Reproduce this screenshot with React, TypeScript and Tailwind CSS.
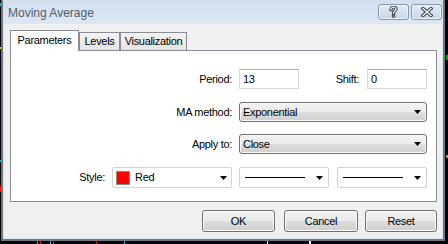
import React from "react";

const ui = "font-['Liberation_Sans',Arial,sans-serif] text-[11px] tracking-[-0.3px] text-black";
const btnBg =
  "bg-[linear-gradient(#f2f2f2_0%,#ebebeb_50%,#dddddd_50%,#cfcfcf_100%)] shadow-[inset_0_0_0_1px_#fbfbfb]";

function Arrow() {
  return (
    <svg width="7" height="4" viewBox="0 0 7 4" className="shrink-0">
      <path d="M0 0H7L3.5 4Z" fill="#000" />
    </svg>
  );
}

function HelpGlyph() {
  return (
    <svg width="9" height="12" viewBox="0 0 9 12">
      <path d="M2 3.6C2 1.8 3.2 1 4.5 1C5.9 1 7 1.9 7 3.3C7 5 4.5 5.2 4.5 7.2" fill="none" stroke="#37404d" strokeWidth="3.2" strokeLinecap="square" />
      <rect x="2.9" y="8.6" width="3.2" height="3" fill="#37404d" />
      <path d="M2 3.6C2 1.8 3.2 1 4.5 1C5.9 1 7 1.9 7 3.3C7 5 4.5 5.2 4.5 7.2" fill="none" stroke="#fff" strokeWidth="1.2" strokeLinecap="square" />
      <rect x="4" y="9.6" width="1" height="1" fill="#fff" />
    </svg>
  );
}

function CloseGlyph() {
  return (
    <svg width="12" height="10" viewBox="0 0 12 10">
      <path d="M2 1.5L10 8.5M10 1.5L2 8.5" stroke="#37404d" strokeWidth="3.4" strokeLinecap="square" />
      <path d="M2 1.5L10 8.5M10 1.5L2 8.5" stroke="#fff" strokeWidth="1.3" strokeLinecap="square" />
    </svg>
  );
}

function TitleButton({ children }: { children: React.ReactNode }) {
  return (
    <div className="w-[31px] h-[16px] flex items-center justify-center rounded-[3px] border border-[#8798b1] bg-[linear-gradient(#e2ebf6,#c8d6e9)] shadow-[inset_0_0_0_1px_#eef3fa]">
      {children}
    </div>
  );
}

function TextBox({ value }: { value: string }) {
  return (
    <div className="w-[60px] h-[20px] flex items-center pl-[3px] bg-white border border-[#d6d9de] border-t-[#abadb3]">
      {value}
    </div>
  );
}

function Select({ value }: { value: string }) {
  return (
    <div className={`w-[188px] h-[20px] flex items-center justify-between pl-[3px] pr-[5px] rounded-[3px] border border-[#707070] ${btnBg}`}>
      <span>{value}</span>
      <Arrow />
    </div>
  );
}

function LineCombo() {
  return (
    <div className="w-[90px] h-[21px] flex items-center pl-[5px] pr-[5px] bg-white rounded-[2px] border border-[#cfd2d7]">
      <div className="flex-1 h-px bg-black mr-[11px]" />
      <Arrow />
    </div>
  );
}

function Button({ label, w }: { label: string; w: string }) {
  return (
    <div className={`${w} h-[22px] flex items-center justify-center rounded-[3px] border border-[#707070] ${btnBg}`}>
      {label}
    </div>
  );
}

export default function App() {
  return (
    <div className={`w-[448px] h-[244px] bg-black relative overflow-hidden pl-[1px] ${ui}`}>
      {/* chart bits behind the dialog */}
      <div className="absolute left-0 top-[3px] w-px h-[3px] bg-[#00c8c8]" />
      <div className="absolute left-0 top-[47px] w-px h-[2px] bg-[#e6e600]" />
      <div className="absolute left-0 top-[186px] w-px h-[6px] bg-[#ff0000]" />
      <div className="absolute left-0 top-[160px] w-px h-[2px] bg-[#00c8c8]" />
      <div className="absolute left-[37px] top-[241px] w-px h-[3px] bg-[#00c8c8]" />
      <div className="absolute left-[40px] top-[241px] w-px h-[3px] bg-[#ff0000]" />
      <div className="absolute left-[50px] top-[241px] w-px h-[3px] bg-[#00c8c8]" />
      <div className="absolute left-[53px] top-[241px] w-px h-[3px] bg-[#ff0000]" />
      <div className="absolute left-[96px] top-[241px] w-px h-[3px] bg-[#ff0000]" />
      <div className="absolute left-[124px] top-[241px] w-px h-[3px] bg-[#00c8c8]" />
      <div className="absolute left-[267px] top-[241px] w-px h-[3px] bg-[#ffffff]" />
      <div className="absolute left-[309px] top-[241px] w-[2px] h-[3px] bg-[#ffffff]" />
      <div className="absolute left-[446px] top-[55px] w-[2px] h-[5px] bg-[#00a000]" />
      <div className="absolute left-[446px] top-[155px] w-[2px] h-[3px] bg-[#ff8000]" />

      <div className="w-[444px] h-[241px] flex flex-col border-x-2 border-b-2 border-[#6d7787] bg-[#dae5f2]">
        {/* title bar */}
        <div className="h-[24px] flex items-center justify-between pl-[5px] pr-[1px] bg-[linear-gradient(#d3dfee,#dce7f4)]">
          <span className="font-['Liberation_Sans',Arial,sans-serif] text-[12px] tracking-normal text-[#525d6b] pt-[2px]">
            Moving Average
          </span>
          <div className="flex gap-[2px] -mt-[1px]">
            <TitleButton>
              <HelpGlyph />
            </TitleButton>
            <TitleButton>
              <CloseGlyph />
            </TitleButton>
          </div>
        </div>

        {/* body */}
        <div className="flex-1 mx-[1px] mb-[1px] bg-[#f0f0f0] flex flex-col pl-[6px] pr-[5px] pt-[6px]">
          {/* tabs */}
          <div className="h-[20px] flex items-end">
            <div className="relative z-10 w-[69px] h-[21px] -mb-[1px] flex items-center justify-center bg-white border-x border-t border-[#898c95] pb-[2px]">
              Parameters
            </div>
            <div className="w-[41px] h-[18px] flex items-center justify-center bg-[linear-gradient(#f3f3f3,#e4e4e4)] border-x border-t border-[#898c95]">
              Levels
            </div>
            <div className="w-[67px] h-[18px] flex items-center justify-center bg-[linear-gradient(#f3f3f3,#e4e4e4)] border-x border-t border-[#898c95]">
              Visualization
            </div>
          </div>

          {/* panel */}
          <div className="w-[427px] h-[152px] bg-white border border-[#898c95] pt-[18px] flex flex-col">
            <div className="flex items-center h-[20px]">
              <div className="w-[221px] text-right">Period:</div>
              <div className="ml-[7px]">
                <TextBox value="13" />
              </div>
              <div className="w-[60px] text-right">Shift:</div>
              <div className="ml-[8px]">
                <TextBox value="0" />
              </div>
            </div>
            <div className="flex items-center h-[20px] mt-[13px]">
              <div className="w-[221px] text-right">MA method:</div>
              <div className="ml-[7px]">
                <Select value="Exponential" />
              </div>
            </div>
            <div className="flex items-center h-[20px] mt-[12px]">
              <div className="w-[221px] text-right">Apply to:</div>
              <div className="ml-[7px]">
                <Select value="Close" />
              </div>
            </div>
            <div className="flex items-center h-[21px] mt-[13px]">
              <div className="w-[94px] text-right">Style:</div>
              <div className="ml-[7px] w-[120px] h-[21px] flex items-center pl-[3px] pr-[4px] bg-white rounded-[2px] border border-[#cfd2d7]">
                <div className="w-[14px] h-[14px] bg-[#ff0000] border border-[#8a8a8a]" />
                <span className="ml-[5px] flex-1">Red</span>
                <Arrow />
              </div>
              <div className="ml-[7px]">
                <LineCombo />
              </div>
              <div className="ml-[8px]">
                <LineCombo />
              </div>
            </div>
          </div>

          {/* buttons */}
          <div className="mt-[8px] flex justify-end">
            <Button label="OK" w="w-[73px]" />
            <div className="ml-[9px]">
              <Button label="Cancel" w="w-[74px]" />
            </div>
            <div className="ml-[7px]">
              <Button label="Reset" w="w-[72px]" />
            </div>
          </div>
        </div>
      </div>
    </div>
  );
}
